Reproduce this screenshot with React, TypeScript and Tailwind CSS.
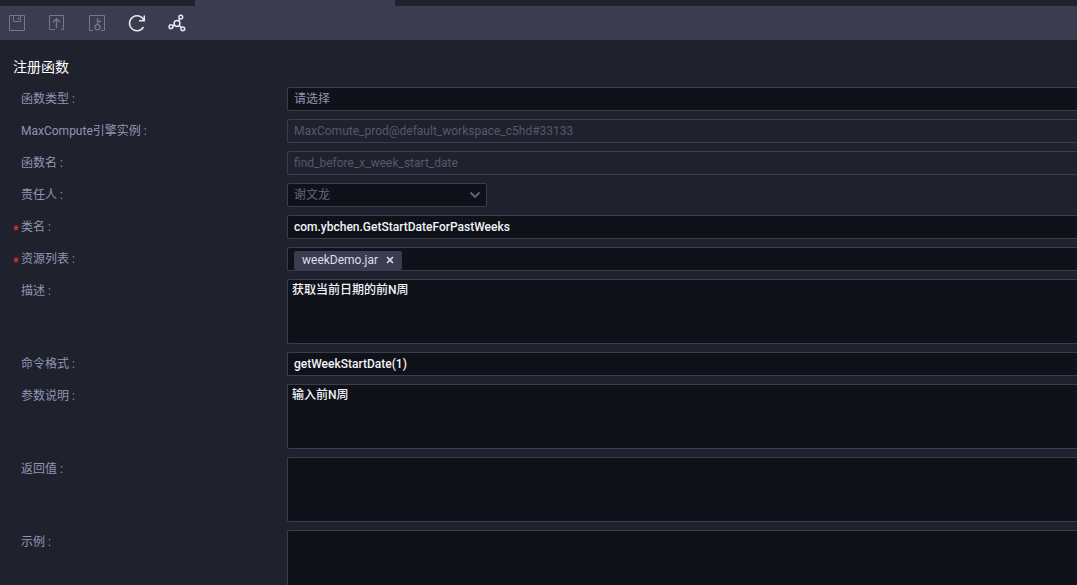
import { useState } from 'react';
import type { ReactNode } from 'react';

interface FieldRowProps {
  id: string;
  label: string;
  required?: boolean;
  children: ReactNode;
}

const boxClass = 'block w-full rounded-l-xs border border-r-0 border-[#3b3c50] outline-none';
const inputClass = `${boxClass} h-6 bg-[#0f1218] px-1.5 font-medium text-[#f2f3f8]`;
const disabledClass = `${boxClass} h-6 bg-transparent px-1.5 text-[#55586f]`;
const areaClass = `${boxClass} h-[65px] resize-none bg-[#0f1218] px-1 py-0.5 font-medium leading-4 text-[#f2f3f8]`;

function FieldRow({ id, label, required, children }: FieldRowProps) {
  return (
    <div className="grid grid-cols-[274px_minmax(0,1fr)]">
      <label htmlFor={id} className="flex h-6 items-center text-[#9295b3]">
        <span className="w-2 pt-1.5 font-bold text-[#f02b35]" aria-hidden="true">
          {required ? '*' : ''}
        </span>
        {label} :
      </label>
      {children}
    </div>
  );
}

function ToolButton({ title, disabled, children }: { title: string; disabled?: boolean; children: ReactNode }) {
  return (
    <button
      type="button"
      title={title}
      aria-label={title}
      disabled={disabled}
      className="flex size-6 items-center justify-center text-[#e6e8f2] disabled:text-[#74778a]"
    >
      <svg viewBox="0 0 18 18" className="size-[18px]" fill="none" stroke="currentColor">
        {children}
      </svg>
    </button>
  );
}

function Toolbar() {
  return (
    <div className="flex h-[34px] items-center gap-4 bg-[#3b3c50] pl-[5px]">
      <ToolButton title="保存" disabled>
        <path d="M1.5 1.5h15v15h-15zM5.5 1.5v6h7v-6M10.5 3v3" />
      </ToolButton>
      <ToolButton title="提交" disabled>
        <path d="M7 15.5H1.5v-14h14v14H13" />
        <path strokeWidth="1.3" d="M8.5 14V5M5 8.2l3.5-3.5L12 8.2" />
      </ToolButton>
      <ToolButton title="提交并解锁" disabled>
        <path d="M5 16.5H1.5v-15h15v15H13" />
        <path strokeWidth="1.3" d="M9.5 11V4M9.5 7.5H13" />
        <circle cx="9.5" cy="13.2" r="2.5" strokeWidth="1.3" />
      </ToolButton>
      <ToolButton title="刷新">
        <path strokeWidth="1.5" d="M16 6.5A7.5 7.5 0 1 0 15.5 13M16.3 1.5v5.3H11" />
      </ToolButton>
      <ToolButton title="血缘关系">
        <g strokeWidth="1.5">
          <circle cx="9" cy="9.5" r="2.9" />
          <circle cx="12.8" cy="3.2" r="1.9" />
          <circle cx="3" cy="12.7" r="1.9" />
          <circle cx="14.8" cy="14.8" r="1.9" />
          <path d="m10.5 7 1.3-2.2M6.3 10.8l-1.6 1M11.2 11.5l2.2 2" />
        </g>
      </ToolButton>
    </div>
  );
}

export default function App() {
  const [className, setClassName] = useState('com.ybchen.GetStartDateForPastWeeks');
  const [resources, setResources] = useState(['weekDemo.jar']);
  const [command, setCommand] = useState('getWeekStartDate(1)');

  return (
    <div className="h-screen overflow-hidden bg-[#1f212d] font-['Roboto','Noto_Sans_CJK_SC',sans-serif] text-xs">
      {/* Lower edge of the tab strip */}
      <div className="h-1.5 pl-[195px]">
        <div className="h-full w-[200px] bg-[#3b3c50]" />
      </div>
      <Toolbar />

      <form className="pl-[13px] pt-4" onSubmit={(e) => e.preventDefault()}>
        <h1 className="mb-[9px] text-sm leading-[22px] text-white">注册函数</h1>

        <div className="flex flex-col gap-2">
          <FieldRow id="type" label="函数类型">
            <select id="type" className={`${boxClass} h-6 appearance-none bg-[#0f1218] px-1.5 text-[#9295b3]`}>
              <option>请选择</option>
            </select>
          </FieldRow>

          <FieldRow id="engine" label="MaxCompute引擎实例">
            <input id="engine" disabled className={disabledClass} value="MaxComute_prod@default_workspace_c5hd#33133" />
          </FieldRow>

          <FieldRow id="name" label="函数名">
            <input id="name" disabled className={disabledClass} value="find_before_x_week_start_date" />
          </FieldRow>

          <FieldRow id="owner" label="责任人">
            <div className="relative w-[200px]">
              <select
                id="owner"
                disabled
                className="block h-6 w-full appearance-none rounded-xs border border-[#3b3c50] bg-[#0f1218] px-1.5 text-[#62657f] opacity-100"
              >
                <option>谢文龙</option>
              </select>
              <svg
                viewBox="0 0 12 12"
                className="pointer-events-none absolute right-1.5 top-1.5 size-3"
                fill="none"
                stroke="#62657d"
                strokeWidth="1.8"
              >
                <path d="m1.5 3.5 4.5 4.5 4.5-4.5" />
              </svg>
            </div>
          </FieldRow>

          <FieldRow id="class" label="类名" required>
            <input id="class" className={inputClass} value={className} onChange={(e) => setClassName(e.target.value)} />
          </FieldRow>

          <FieldRow id="resources" label="资源列表" required>
            <div className="flex h-6 items-center rounded-l-xs border border-r-0 border-[#3b3c50] bg-[#0f1218] pl-1.5 pt-0.5">
              {resources.map((name) => (
                <span key={name} className="flex h-[19px] items-center rounded-xs bg-[#3b3c50] pl-2 text-[#dcdeeb]">
                  {name}
                  <button
                    type="button"
                    aria-label={`移除 ${name}`}
                    className="flex h-full w-6 items-center justify-center"
                    onClick={() => setResources(resources.filter((r) => r !== name))}
                  >
                    <svg viewBox="0 0 8 8" className="size-2" fill="none" stroke="currentColor" strokeWidth="1.6">
                      <path d="m1 1 6 6M7 1 1 7" />
                    </svg>
                  </button>
                </span>
              ))}
              <input id="resources" className="h-full min-w-0 flex-1 bg-transparent px-1 text-white outline-none" />
            </div>
          </FieldRow>

          <FieldRow id="description" label="描述">
            <textarea id="description" className={areaClass} defaultValue="获取当前日期的前N周" />
          </FieldRow>

          <FieldRow id="command" label="命令格式">
            <input id="command" className={inputClass} value={command} onChange={(e) => setCommand(e.target.value)} />
          </FieldRow>

          <FieldRow id="params" label="参数说明">
            <textarea id="params" className={areaClass} defaultValue="输入前N周" />
          </FieldRow>

          <FieldRow id="returns" label="返回值">
            <textarea id="returns" className={areaClass} />
          </FieldRow>

          <FieldRow id="example" label="示例">
            <textarea id="example" className={areaClass} />
          </FieldRow>
        </div>
      </form>
    </div>
  );
}
